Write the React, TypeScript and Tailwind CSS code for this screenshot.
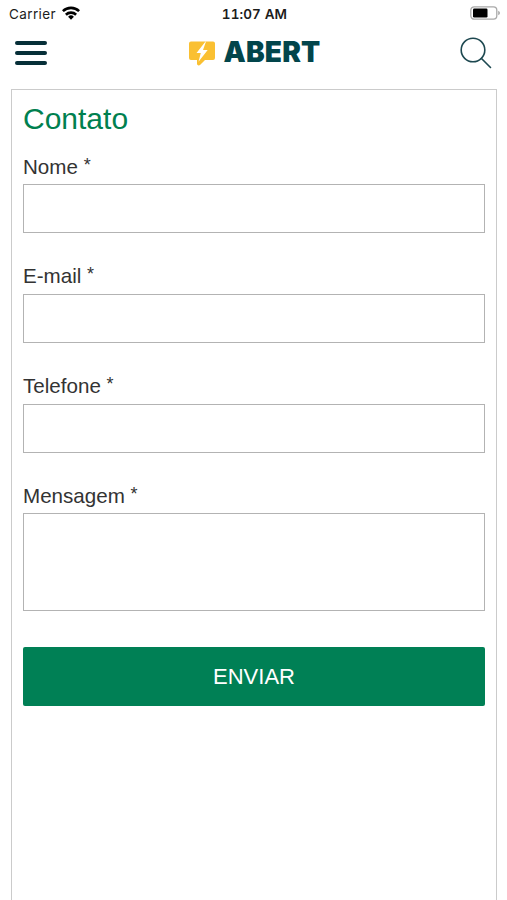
import { useState } from 'react';
import type { FormEvent } from 'react';

type FieldName = 'nome' | 'email' | 'telefone' | 'mensagem';

const fields: { name: FieldName; label: string; type: string }[] = [
  { name: 'nome', label: 'Nome', type: 'text' },
  { name: 'email', label: 'E-mail', type: 'email' },
  { name: 'telefone', label: 'Telefone', type: 'tel' },
  { name: 'mensagem', label: 'Mensagem', type: 'textarea' },
];

export default function App() {
  return (
    <div className="flex h-screen flex-col overflow-hidden bg-white font-['Liberation_Sans',sans-serif]">
      <StatusBar />
      <Header />
      <main className="ml-[11px] mr-[10px] mt-[11px] flex-1 border border-b-0 border-[#cbcbcb] px-[11px]">
        <ContactForm />
      </main>
    </div>
  );
}

function StatusBar() {
  return (
    <div className="grid h-7 grid-cols-3 items-center pl-[9px] pr-[7px] font-['Inter',sans-serif] text-[13.5px] leading-7 text-[#1c1c1c]">
      <div className="flex items-center gap-[6px]">
        <span className="tracking-[0.38px]">Carrier</span>
        <WifiIcon />
      </div>
      <span className="text-center font-semibold tabular-nums tracking-[0.1px]">11:07 AM</span>
      <div className="flex justify-end">
        <BatteryIcon />
      </div>
    </div>
  );
}

function Header() {
  return (
    <header className="flex h-[50px] items-center justify-between pl-[15px] pr-[15px]">
      <button type="button" aria-label="Menu" className="flex w-8 flex-col gap-[5.6px]">
        <span className="h-1 rounded-full bg-[#062f38]" />
        <span className="h-1 rounded-full bg-[#062f38]" />
        <span className="h-1 rounded-full bg-[#062f38]" />
      </button>
      <div className="ml-[3px] flex items-center gap-2">
        <LogoMark />
        <span className="mb-[2px] font-['Inter',sans-serif] text-[28px] font-black leading-none tracking-[0.2px] text-[#02454b]">
          ABERT
        </span>
      </div>
      <button type="button" aria-label="Buscar">
        <SearchIcon />
      </button>
    </header>
  );
}

function ContactForm() {
  const [values, setValues] = useState<Record<FieldName, string>>({
    nome: '',
    email: '',
    telefone: '',
    mensagem: '',
  });

  const handleSubmit = (e: FormEvent) => e.preventDefault();
  const update = (name: FieldName, value: string) => setValues((v) => ({ ...v, [name]: value }));

  return (
    <form onSubmit={handleSubmit}>
      <h1 className="pt-[11px] text-[30px] leading-[36px] text-[#00804f]">Contato</h1>
      <div className="mt-[17.5px] flex flex-col gap-[31px]">
        {fields.map((f) => (
          <label key={f.name} className="block text-[20.6px] leading-[24px] text-[#333333]">
            <span className="mb-[5.7px] block">
              {f.label} <span className="align-[3px] text-[18px] leading-none">*</span>
            </span>
            {f.type === 'textarea' ? (
              <textarea
                value={values[f.name]}
                onChange={(e) => update(f.name, e.target.value)}
                className="block h-[98px] w-full resize-none border border-[#b3b3b3] px-3 py-2 outline-none"
              />
            ) : (
              <input
                type={f.type}
                value={values[f.name]}
                onChange={(e) => update(f.name, e.target.value)}
                className="block h-[49px] w-full border border-[#b3b3b3] px-3 outline-none"
              />
            )}
          </label>
        ))}
      </div>
      <button type="submit" className="mt-9 block h-[59px] w-full rounded-[2px] bg-[#008055] text-[22px] text-white">
        ENVIAR
      </button>
    </form>
  );
}

function WifiIcon() {
  return (
    <svg width="18" height="14" viewBox="0 0 18 14" fill="none" stroke="#000" strokeWidth="2.6" className="mb-[2px]">
      <path d="M0.9 5.2a11.5 11.5 0 0 1 16.2 0" />
      <path d="M3.9 8.7a7.3 7.3 0 0 1 10.2 0" />
      <path d="M9 13.8l-2.9-3a4.1 4.1 0 0 1 5.8 0z" fill="#000" stroke="none" />
    </svg>
  );
}

function BatteryIcon() {
  return (
    <svg width="30" height="14" viewBox="0 0 30 14" className="mb-[2px]">
      <rect x="0.8" y="0.8" width="26" height="12.4" rx="3.4" fill="none" stroke="#a9a9a9" strokeWidth="1.3" />
      <rect x="3" y="2.6" width="14.5" height="8.8" rx="1.2" fill="#000" />
      <path d="M28.2 4.8q1.8.8 1.8 2.2t-1.8 2.2z" fill="#a9a9a9" />
    </svg>
  );
}

function LogoMark() {
  return (
    <svg width="26" height="25" viewBox="0 0 26 25">
      <path
        d="M2 0.5h22a2 2 0 0 1 2 2v14.500a2 2 0 0 1-2 2h-8l-5 5a1.800 1.800 0 0 1-3-1.300v-3.700h-6a2 2 0 0 1-2-2v-14.500a2 2 0 0 1 2-2z"
        fill="#fac032"
      />
      <path d="M16.500 0.500l-9 11.500h4.300l-2.300 8.800 9.200-11.800h-4.700l3-8.500z" fill="#fff" />
    </svg>
  );
}

function SearchIcon() {
  return (
    <svg width="32" height="32" viewBox="0 0 32 32" fill="none" stroke="#1d4850" strokeWidth="1.6" strokeLinecap="round">
      <circle cx="13" cy="13" r="11.800" />
      <path d="M21.500 21.500l9 9" />
    </svg>
  );
}
